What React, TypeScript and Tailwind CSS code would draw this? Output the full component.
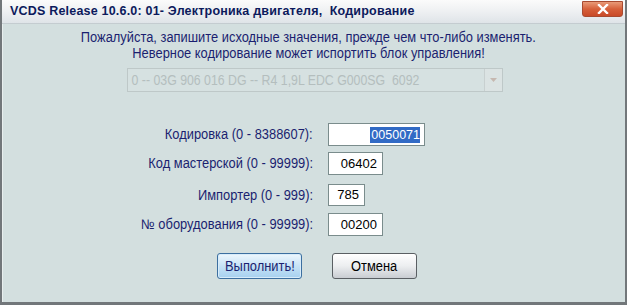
import React from 'react';

const rows = [
  { label: 'Кодировка (0 - 8388607):', value: '0050071', w: 'w-[97px]', h: 'h-[23px]', mt: 'mt-[31px]', selected: true },
  { label: 'Код мастерской (0 - 99999):', value: '06402', w: 'w-[55px]', h: 'h-[23px]', mt: 'mt-[6px]', selected: false },
  { label: 'Импортер (0 - 999):', value: '785', w: 'w-[37px]', h: 'h-[22px]', mt: 'mt-[9px]', selected: false },
  { label: '№ оборудования (0 - 99999):', value: '00200', w: 'w-[55px]', h: 'h-[23px]', mt: 'mt-[7px]', selected: false },
];

export default function App() {
  return (
    <div className="w-[627px] h-[305px] overflow-hidden bg-[#d3dfdf] flex flex-col border-x-2 border-b-[3px] border-[#72777a] font-['Liberation_Sans',Arial,sans-serif]">
      {/* title bar */}
      <div className="h-[24px] shrink-0 flex items-center justify-between pl-[8px] pr-[2px] bg-gradient-to-b from-[#fbfbfb] via-[#eef0f2] to-[#dfe4e8] border-b border-[#c4ccd0]">
        <span className="text-[12.5px] font-bold text-[#0c1a5c] tracking-[0.2px]">
          VCDS Release 10.6.0: 01- Электроника двигателя,&nbsp; Кодирование
        </span>
        <div className="w-[41px] h-[16px] mb-[5px] rounded-b-[3px] bg-gradient-to-b from-[#e89a78] via-[#d6603a] to-[#c94a28] border border-[#a84a30] flex items-center justify-center">
          <svg width="12" height="10" viewBox="0 0 12 10">
            <path d="M2 1 L10 9 M10 1 L2 9" stroke="#ffffff" strokeWidth="2.4" strokeLinecap="square" />
          </svg>
        </div>
      </div>

      {/* body */}
      <div className="flex-1 flex flex-col border-l border-[#e8eeee] pt-[5px]">
        <div className="flex flex-col items-center mr-[11px]">
          <p className="text-[14px] leading-[16px] text-[#1b1f70] scale-x-[0.92] whitespace-nowrap">
            Пожалуйста, запишите исходные значения, прежде чем что-либо изменять.
          </p>
          <p className="text-[14px] leading-[16px] text-[#1b1f70] scale-x-[0.92] whitespace-nowrap">
            Неверное кодирование может испортить блок управления!
          </p>
        </div>

        <div className="mt-[7px] ml-[124px] w-[376px] h-[24px] border border-[#bec8c8] bg-[#d6e1e1] flex items-center">
          <span className="flex-1 pl-[4px] text-[14px] text-[#b4bebe] scale-x-[0.88] origin-left whitespace-pre">
            0 -- 03G 906 016 DG -- R4 1,9L EDC G000SG  6092
          </span>
          <div className="w-[18px] h-full border-l border-[#c8d0d0] bg-[#dbe3e3] flex items-center justify-center">
            <svg width="7" height="4" viewBox="0 0 7 4">
              <path d="M0 0 H7 L3.5 4 Z" fill="#c6b8b0" />
            </svg>
          </div>
        </div>

        <div className="flex flex-col">
          {rows.map((r) => (
            <div key={r.label} className={`flex items-center ${r.mt}`}>
              <span className="w-[310px] text-right text-[14px] text-[#1b1f70] whitespace-nowrap">
                <span className="inline-block scale-x-[0.92] origin-right">{r.label}</span>
              </span>
              <div className={`ml-[15px] ${r.w} ${r.h} bg-white border border-[#7a8c8c] flex items-center justify-end pr-[5px] text-[13px] text-black`}>
                {r.selected ? (
                  <span className="bg-[#316ac5] text-white text-[12.5px] leading-[16px] pl-[1px] -mr-[1px]">{r.value}</span>
                ) : (
                  <span>{r.value}</span>
                )}
              </div>
            </div>
          ))}
        </div>

        <div className="mt-[17px] flex gap-[30px] ml-[214px]">
          <button className="w-[85px] h-[26px] rounded-[3px] border border-[#3c6fa0] bg-gradient-to-b from-[#eef7fd] via-[#c6e2f6] to-[#a6d0ef] text-[14px] text-[#1b1f70] shadow-[inset_0_0_0_1px_#d8ecfa]">
            <span className="inline-block scale-x-[0.92]">Выполнить!</span>
          </button>
          <button className="w-[85px] h-[26px] rounded-[3px] border border-[#5a5f63] bg-gradient-to-b from-[#ffffff] via-[#eceef0] to-[#c9cdd2] text-[14px] text-black">
            <span className="inline-block scale-x-[0.92]">Отмена</span>
          </button>
        </div>
      </div>
    </div>
  );
}
